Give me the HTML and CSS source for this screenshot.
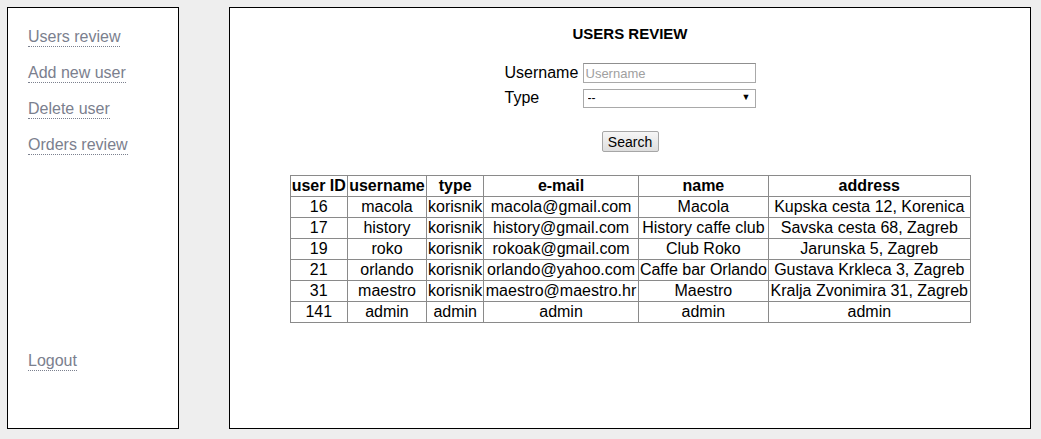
FILE: index.html
```html
<!DOCTYPE html>
<html lang="en">
<head>
  <meta charset="UTF-8" />
  <title>Users review</title>
  <link rel="stylesheet" href="styles.css">
</head>
<body>
  <div class="page">
    <div class="sidebar">
      <a href="#" class="nav-link">Users review</a>
      <a href="#" class="nav-link">Add new user</a>
      <a href="#" class="nav-link">Delete user</a>
      <a href="#" class="nav-link">Orders review</a>
      <a href="#" class="nav-link logout">Logout</a>
    </div>
    <div class="content">
      <h3 class="title">USERS REVIEW</h3>
      <form class="search-form">
        <label for="username">Username</label>
        <input type="text" id="username" placeholder="Username" />
        <label for="type">Type</label>
        <div class="select-wrap">
          <select id="type">
            <option>--</option>
            <option>korisnik</option>
            <option>admin</option>
          </select>
          <span class="arrow">▼</span>
        </div>
      </form>
      <button type="button" class="search-btn">Search</button>
      <table class="users">
        <tr>
          <th>user ID</th>
          <th>username</th>
          <th>type</th>
          <th>e-mail</th>
          <th>name</th>
          <th>address</th>
        </tr>
        <tr><td>16</td><td>macola</td><td>korisnik</td><td>macola@gmail.com</td><td>Macola</td><td>Kupska cesta 12, Korenica</td></tr>
        <tr><td>17</td><td>history</td><td>korisnik</td><td>history@gmail.com</td><td>History caffe club</td><td>Savska cesta 68, Zagreb</td></tr>
        <tr><td>19</td><td>roko</td><td>korisnik</td><td>rokoak@gmail.com</td><td>Club Roko</td><td>Jarunska 5, Zagreb</td></tr>
        <tr><td>21</td><td>orlando</td><td>korisnik</td><td>orlando@yahoo.com</td><td>Caffe bar Orlando</td><td>Gustava Krkleca 3, Zagreb</td></tr>
        <tr><td>31</td><td>maestro</td><td>korisnik</td><td>maestro@maestro.hr</td><td>Maestro</td><td>Kralja Zvonimira 31, Zagreb</td></tr>
        <tr><td>141</td><td>admin</td><td>admin</td><td>admin</td><td>admin</td><td>admin</td></tr>
      </table>
    </div>
  </div>
</body>
</html>
```

FILE: styles.css
```css
* {
  box-sizing: border-box;
}

body {
  margin: 0;
  background: #eeeeee;
  font-family: "Liberation Sans", Arial, sans-serif;
  font-size: 16px;
  color: #000;
}

.page {
  display: flex;
  gap: 50px;
  padding: 7px 10px 10px 7px;
  height: 439px;
}

.sidebar {
  width: 172px;
  background: #fff;
  border: 1px solid #000;
  display: flex;
  flex-direction: column;
  align-items: flex-start;
  padding: 20px 0 57px 20px;
}

.nav-link {
  display: inline-block;
  line-height: 18px;
  color: #7b808e;
  text-decoration: none;
  border-bottom: 1px dotted #7b808e;
  margin-bottom: 17px;
}

.nav-link.logout {
  margin-top: auto;
  margin-bottom: 0;
}

.content {
  flex: 1;
  background: #fff;
  border: 1px solid #000;
  display: flex;
  flex-direction: column;
  align-items: center;
}

.title {
  margin: 18px 0 0;
  font-size: 15px;
  line-height: 16px;
  font-weight: bold;
}

.search-form {
  margin-top: 21px;
  display: grid;
  grid-template-columns: 74px 173px;
  column-gap: 4px;
  row-gap: 5px;
  align-items: center;
}

.search-form label {
  line-height: 18px;
}

.search-form input {
  height: 20px;
  width: 173px;
  border: 1px solid #a9a9a9;
  border-top-color: #8f8f8f;
  padding: 0 2px;
  font-family: inherit;
  font-size: 13px;
}

.search-form input::placeholder {
  color: #a0a0a0;
}

.select-wrap {
  position: relative;
  height: 19px;
}

.select-wrap select {
  appearance: none;
  -webkit-appearance: none;
  width: 173px;
  height: 19px;
  border: 1px solid #a9a9a9;
  background: #fff;
  padding: 0 4px;
  font-family: inherit;
  font-size: 12px;
  color: #000;
}

.select-wrap .arrow {
  position: absolute;
  right: 5px;
  top: 4px;
  font-size: 9px;
  line-height: 10px;
  pointer-events: none;
}

.search-btn {
  margin-top: 24px;
  width: 57px;
  height: 21px;
  padding: 0;
  border: 1px solid #a6a6a6;
  border-radius: 2px;
  background: linear-gradient(#f6f6f6, #dedede);
  font-family: inherit;
  font-size: 14px;
  color: #000;
}

.users {
  margin-top: 23px;
  width: 681px;
  border-collapse: collapse;
  border: 1px solid #333;
}

.users th,
.users td {
  border: 1px solid #8a8a8a;
  padding: 1px;
  line-height: 18px;
  text-align: center;
  white-space: nowrap;
}

.users th {
  font-weight: bold;
}
```
